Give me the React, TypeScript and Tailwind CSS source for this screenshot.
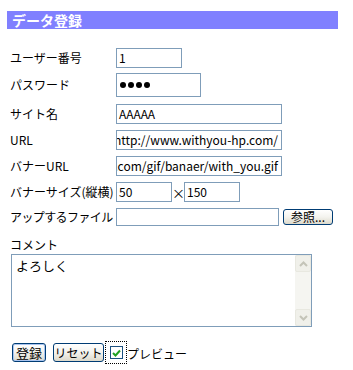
import React from "react";

function Field({ w, h = 20, children }: { w: number | string; h?: number; children?: React.ReactNode }) {
  return (
    <div
      className="flex items-center justify-end overflow-hidden whitespace-nowrap border border-[#7f9db9] bg-white pr-[3px] text-[12px] leading-none"
      style={{ width: w, height: h }}
    >
      <span className="shrink-0">{children}</span>
    </div>
  );
}

function Row({ label, top, h = 20, tight = false, children }: { label: string; top: number; h?: number; tight?: boolean; children: React.ReactNode }) {
  return (
    <div className="flex items-center" style={{ marginTop: top, height: h }}>
      <div className={"w-[106px] shrink-0 whitespace-nowrap " + (tight ? "tracking-[-0.6px]" : "")}>{label}</div>
      {children}
    </div>
  );
}

function XpButton({ label, primary = false, className = "" }: { label: string; primary?: boolean; className?: string }) {
  return (
    <button
      className={
        "flex items-center justify-center whitespace-nowrap rounded-[3px] border border-[#003c74] bg-gradient-to-b from-white via-[#f4f3ee] to-[#dcd9cb] px-0 text-[12px] leading-none text-black " +
        (primary ? "shadow-[inset_0_0_0_1px_#a9c4ef] " : "") +
        className
      }
    >
      {label}
    </button>
  );
}

export default function App() {
  return (
    <div className="h-[370px] w-[353px] bg-white pt-[11px] font-['Noto_Sans_CJK_JP',sans-serif] text-[12px] text-black">
      {/* title bar */}
      <div className="ml-[7px] h-[18px] w-[331px] bg-[#8080ff] pl-[5px] text-[14px] font-bold leading-[18px] text-white">
        データ登録
      </div>

      <div className="pl-[10px]">
        <Row label="ユーザー番号" top={19}>
          <div className="flex h-[20px] w-[66px] items-center border border-[#7f9db9] px-[2px] text-[12px]">1</div>
        </Row>
        <Row label="パスワード" top={5} h={24}>
          <div className="flex h-[24px] w-[85px] items-center gap-[2px] border border-[#7f9db9] px-[3px]">
            <span className="h-[6px] w-[6px] rounded-full bg-black" />
            <span className="h-[6px] w-[6px] rounded-full bg-black" />
            <span className="h-[6px] w-[6px] rounded-full bg-black" />
            <span className="h-[6px] w-[6px] rounded-full bg-black" />
          </div>
        </Row>
        <Row label="サイト名" top={7}>
          <div className="flex h-[20px] w-[166px] items-center border border-[#7f9db9] px-[2px] text-[12px]">AAAAA</div>
        </Row>
        <Row label="URL" top={6}>
          <Field w={166}>http://www.withyou-hp.com/</Field>
        </Row>
        <Row label="バナーURL" top={6}>
          <Field w={166}>http://www.withyou-hp.com/gif/banaer/with_you.gif</Field>
        </Row>
        <Row label="バナーサイズ(縦横)" top={6}>
          <div className="flex h-[20px] w-[56px] items-center border border-[#7f9db9] px-[2px] text-[12px]">50</div>
          <span className="w-[12px] text-center text-[13px] leading-none">×</span>
          <div className="flex h-[20px] w-[56px] items-center border border-[#7f9db9] px-[2px] text-[12px]">150</div>
        </Row>
        <Row label="アップするファイル" top={6} h={18} tight>
          <div className="h-[18px] w-[163px] border border-[#7f9db9]" />
          <XpButton label="参照..." className="ml-[4px] h-[16px] w-[50px]" />
        </Row>

        <div className="mt-[11px] h-[16px] leading-[16px]">コメント</div>

        {/* textarea */}
        <div className="mt-[1px] ml-[1px] flex h-[73px] w-[301px] border border-[#7f9db9] bg-white">
          <div className="flex-1 pl-[4px] pt-[3px] text-[13px] leading-[16px]">よろしく</div>
          <div className="flex w-[16px] flex-col bg-[#f5f5f1]">
            <div className="flex h-[17px] items-center justify-center rounded-[2px] border border-[#e8e8e0] bg-[#f0f0ea]">
              <svg width="9" height="6" viewBox="0 0 9 6">
                <path d="M1 5 L4.5 1.5 L8 5" fill="none" stroke="#c4c4b8" strokeWidth="2" />
              </svg>
            </div>
            <div className="flex-1" />
            <div className="flex h-[17px] items-center justify-center rounded-[2px] border border-[#e8e8e0] bg-[#f0f0ea]">
              <svg width="9" height="6" viewBox="0 0 9 6">
                <path d="M1 1 L4.5 4.5 L8 1" fill="none" stroke="#c4c4b8" strokeWidth="2" />
              </svg>
            </div>
          </div>
        </div>

        {/* buttons */}
        <div className="mt-[14px] flex h-[23px] items-center">
          <XpButton label="登録" primary className="ml-[2px] h-[19px] w-[34px] text-[13px]" />
          <XpButton label="リセット" className="ml-[7px] h-[19px] w-[51px]" />
          <div className="ml-[1px] flex h-[23px] w-[22px] items-center justify-center border border-dotted border-black">
            <div className="flex h-[13px] w-[13px] items-center justify-center border border-[#1c5180] bg-white">
              <svg width="9" height="8" viewBox="0 0 9 8">
                <path d="M1 4 L3.5 6.5 L8 1.5" fill="none" stroke="#21a121" strokeWidth="2" />
              </svg>
            </div>
          </div>
          <span className="mt-[3px] text-[12px]">プレビュー</span>
        </div>
      </div>
    </div>
  );
}
